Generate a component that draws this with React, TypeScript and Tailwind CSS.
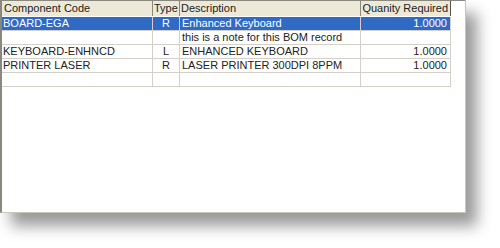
import clsx from 'clsx';

type Row = { code: string; type: string; desc: string; qty: string; selected?: boolean };

const rows: Row[] = [
  { code: 'BOARD-EGA', type: 'R', desc: 'Enhanced Keyboard', qty: '1.0000', selected: true },
  { code: '', type: '', desc: 'this is a note for this BOM record', qty: '' },
  { code: 'KEYBOARD-ENHNCD', type: 'L', desc: 'ENHANCED KEYBOARD', qty: '1.0000' },
  { code: 'PRINTER LASER', type: 'R', desc: 'LASER PRINTER 300DPI 8PPM', qty: '1.0000' },
  { code: '', type: '', desc: '', qty: '' },
];

const cols = 'grid grid-cols-[151px_27px_181px_90px] w-[449px]';

export default function App() {
  return (
    <div className="relative h-[248px] w-[500px] overflow-hidden bg-white font-['Liberation_Sans',Arial,sans-serif] text-[11px] text-black">
      <div className="h-[213px] w-[466px] border-b border-l-2 border-r border-b-[#c9c6bc] border-l-[#8a877f] border-r-[#c9c6bc] bg-white shadow-[11px_13px_14px_rgba(0,0,0,0.4)]">
        <div className="border-t border-[#8a877f]">
          <div className={clsx(cols, 'h-[15px] bg-[#ece9d8] leading-[15px] text-[#222]')}>
            <div className="border-r border-[#8a877f] pl-[2px]">Component Code</div>
            <div className="border-r border-[#8a877f] pl-[1px]">Type</div>
            <div className="border-r border-[#8a877f] pl-[1px]">Description</div>
            <div className="border-r border-[#555] pr-[2px] text-right">Quanity Required</div>
          </div>
          {rows.map((r, i) => (
            <div
              key={i}
              className={clsx(
                cols,
                'h-[14px] border-b border-[#d4d0c8] leading-[13px]',
                i === 0 && 'mt-[1px]',
                r.selected ? 'bg-[#316ac5] text-white' : 'text-[#222]'
              )}
            >
              <div className="border-r border-[#d4d0c8] pl-[1px]">{r.code}</div>
              <div className="border-r border-[#d4d0c8] text-center">{r.type}</div>
              <div className="border-r border-[#d4d0c8] pl-[2px]">{r.desc}</div>
              <div className="border-r border-[#d4d0c8] pr-[3px] text-right">{r.qty}</div>
            </div>
          ))}
        </div>
      </div>
    </div>
  );
}
